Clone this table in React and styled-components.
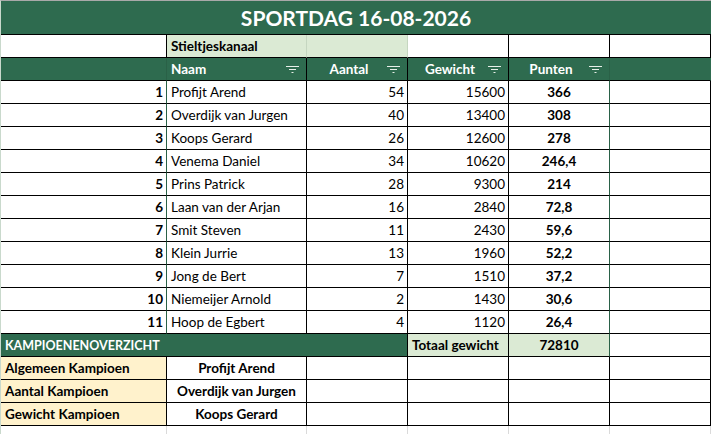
import React from "react";
import styled, { createGlobalStyle } from "styled-components";

const GREEN = "#2e6b4f";
const GREEN_LINE = "#2a6147";
const LIGHT = "#dbead4";
const YELLOW = "#fff2cc";

const GlobalStyle = createGlobalStyle`
  body {
    margin: 0;
    background: #fff;
    font-family: Lato, "Open Sans", sans-serif;
    color: #000;
  }
`;

const Sheet = styled.div`
  display: grid;
  grid-template-columns: 166px 140px 101px 101px 101px 101px;
  width: 710px;
  border-left: 1px solid #c9d9cc;
  border-top: 1px solid #a9a9a9;
`;

const Title = styled.div`
  grid-column: 1 / -1;
  height: 34px;
  box-sizing: border-box;
  background: ${GREEN};
  border-bottom: 1px solid #000;
  color: #fff;
  font-weight: 700;
  font-size: 21px;
  display: flex;
  align-items: center;
  justify-content: center;
  padding-bottom: 1px;
`;

const Cell = styled.div`
  height: 23px;
  box-sizing: border-box;
  display: flex;
  align-items: center;
  justify-content: ${(p) =>
    p.$align === "right" ? "flex-end" : p.$align === "center" ? "center" : "flex-start"};
  padding: 0 ${(p) => (p.$align === "right" ? "3px" : "4px")} 0 4px;
  background: ${(p) => p.$bg || "#fff"};
  color: ${(p) => p.$color || "#000"};
  font-weight: ${(p) => (p.$bold ? 700 : 400)};
  font-size: ${(p) => p.$size || "13.5px"};
  border-right: 1px solid ${(p) => p.$line || "#000"};
  border-bottom: 1px solid #000;
  grid-column: ${(p) => (p.$span ? `span ${p.$span}` : "auto")};
  white-space: nowrap;
  overflow: hidden;
`;

const HeadCell = styled(Cell)`
  background: ${GREEN};
  color: #fff;
  font-weight: 700;
  padding: 0 4px 0 4px;
  justify-content: space-between;
`;

const HeadText = styled.span`
  flex: 1;
  text-align: ${(p) => (p.$center ? "center" : "left")};
`;

const FilterBox = styled.span`
  width: 16px;
  display: flex;
  justify-content: flex-start;
  align-items: center;
`;

const Grid = styled.div`
  height: ${(p) => p.$h}px;
  border-right: 1px solid #dadada;
`;

const FilterIcon = () => (
  <FilterBox>
    <svg width="13" height="9" viewBox="0 0 13 9">
      <g stroke="#e8efe9" strokeWidth="1">
        <line x1="0" y1="1.5" x2="13" y2="1.5" />
        <line x1="3" y1="4.5" x2="10" y2="4.5" />
        <line x1="5.5" y1="7.5" x2="7.5" y2="7.5" />
      </g>
    </svg>
  </FilterBox>
);

const players = [
  [1, "Profijt Arend", 54, 15600, "366"],
  [2, "Overdijk van Jurgen", 40, 13400, "308"],
  [3, "Koops Gerard", 26, 12600, "278"],
  [4, "Venema Daniel", 34, 10620, "246,4"],
  [5, "Prins Patrick", 28, 9300, "214"],
  [6, "Laan van der Arjan", 16, 2840, "72,8"],
  [7, "Smit Steven", 11, 2430, "59,6"],
  [8, "Klein Jurrie", 13, 1960, "52,2"],
  [9, "Jong de Bert", 7, 1510, "37,2"],
  [10, "Niemeijer Arnold", 2, 1430, "30,6"],
  [11, "Hoop de Egbert", 4, 1120, "26,4"],
];

const champions = [
  ["Algemeen Kampioen", "Profijt Arend"],
  ["Aantal Kampioen", "Overdijk van Jurgen"],
  ["Gewicht Kampioen", "Koops Gerard"],
];

export default function App() {
  return (
    <>
      <GlobalStyle />
      <Sheet>
        <Title>SPORTDAG 16-08-2026</Title>

        <Cell />
        <Cell $bg={LIGHT} $bold $line="#c5d6c0">Stieltjeskanaal</Cell>
        <Cell $bg={LIGHT} $line="#c5d6c0" />
        <Cell />
        <Cell />
        <Cell />

        <HeadCell $line={GREEN_LINE} />
        <HeadCell>
          <HeadText>Naam</HeadText>
          <FilterIcon />
        </HeadCell>
        <HeadCell>
          <HeadText $center>Aantal</HeadText>
          <FilterIcon />
        </HeadCell>
        <HeadCell>
          <HeadText $center>Gewicht</HeadText>
          <FilterIcon />
        </HeadCell>
        <HeadCell $line={GREEN_LINE}>
          <HeadText $center>Punten</HeadText>
          <FilterIcon />
        </HeadCell>
        <HeadCell $line={GREEN} />

        {players.map(([rank, name, count, weight, points]) => (
          <React.Fragment key={rank}>
            <Cell $align="right" $bold $line={GREEN_LINE}>{rank}</Cell>
            <Cell>{name}</Cell>
            <Cell $align="right">{count}</Cell>
            <Cell $align="right">{weight}</Cell>
            <Cell $align="center" $bold $line={GREEN_LINE}>{points}</Cell>
            <Cell />
          </React.Fragment>
        ))}

        <Cell $span={3} $bg={GREEN} $color="#fff" $bold $size="12.5px" $line="#000">
          KAMPIOENENOVERZICHT
        </Cell>
        <Cell $bg={LIGHT} $bold>Totaal gewicht</Cell>
        <Cell $bg={LIGHT} $bold $align="center" $line={GREEN_LINE}>72810</Cell>
        <Cell />

        {champions.map(([label, name]) => (
          <React.Fragment key={label}>
            <Cell $bg={YELLOW} $bold>{label}</Cell>
            <Cell $bold $align="center">{name}</Cell>
            <Cell />
            <Cell />
            <Cell />
            <Cell />
          </React.Fragment>
        ))}

        {[0, 1, 2, 3, 4, 5].map((i) => (
          <Grid key={i} $h={10} />
        ))}
      </Sheet>
    </>
  );
}
